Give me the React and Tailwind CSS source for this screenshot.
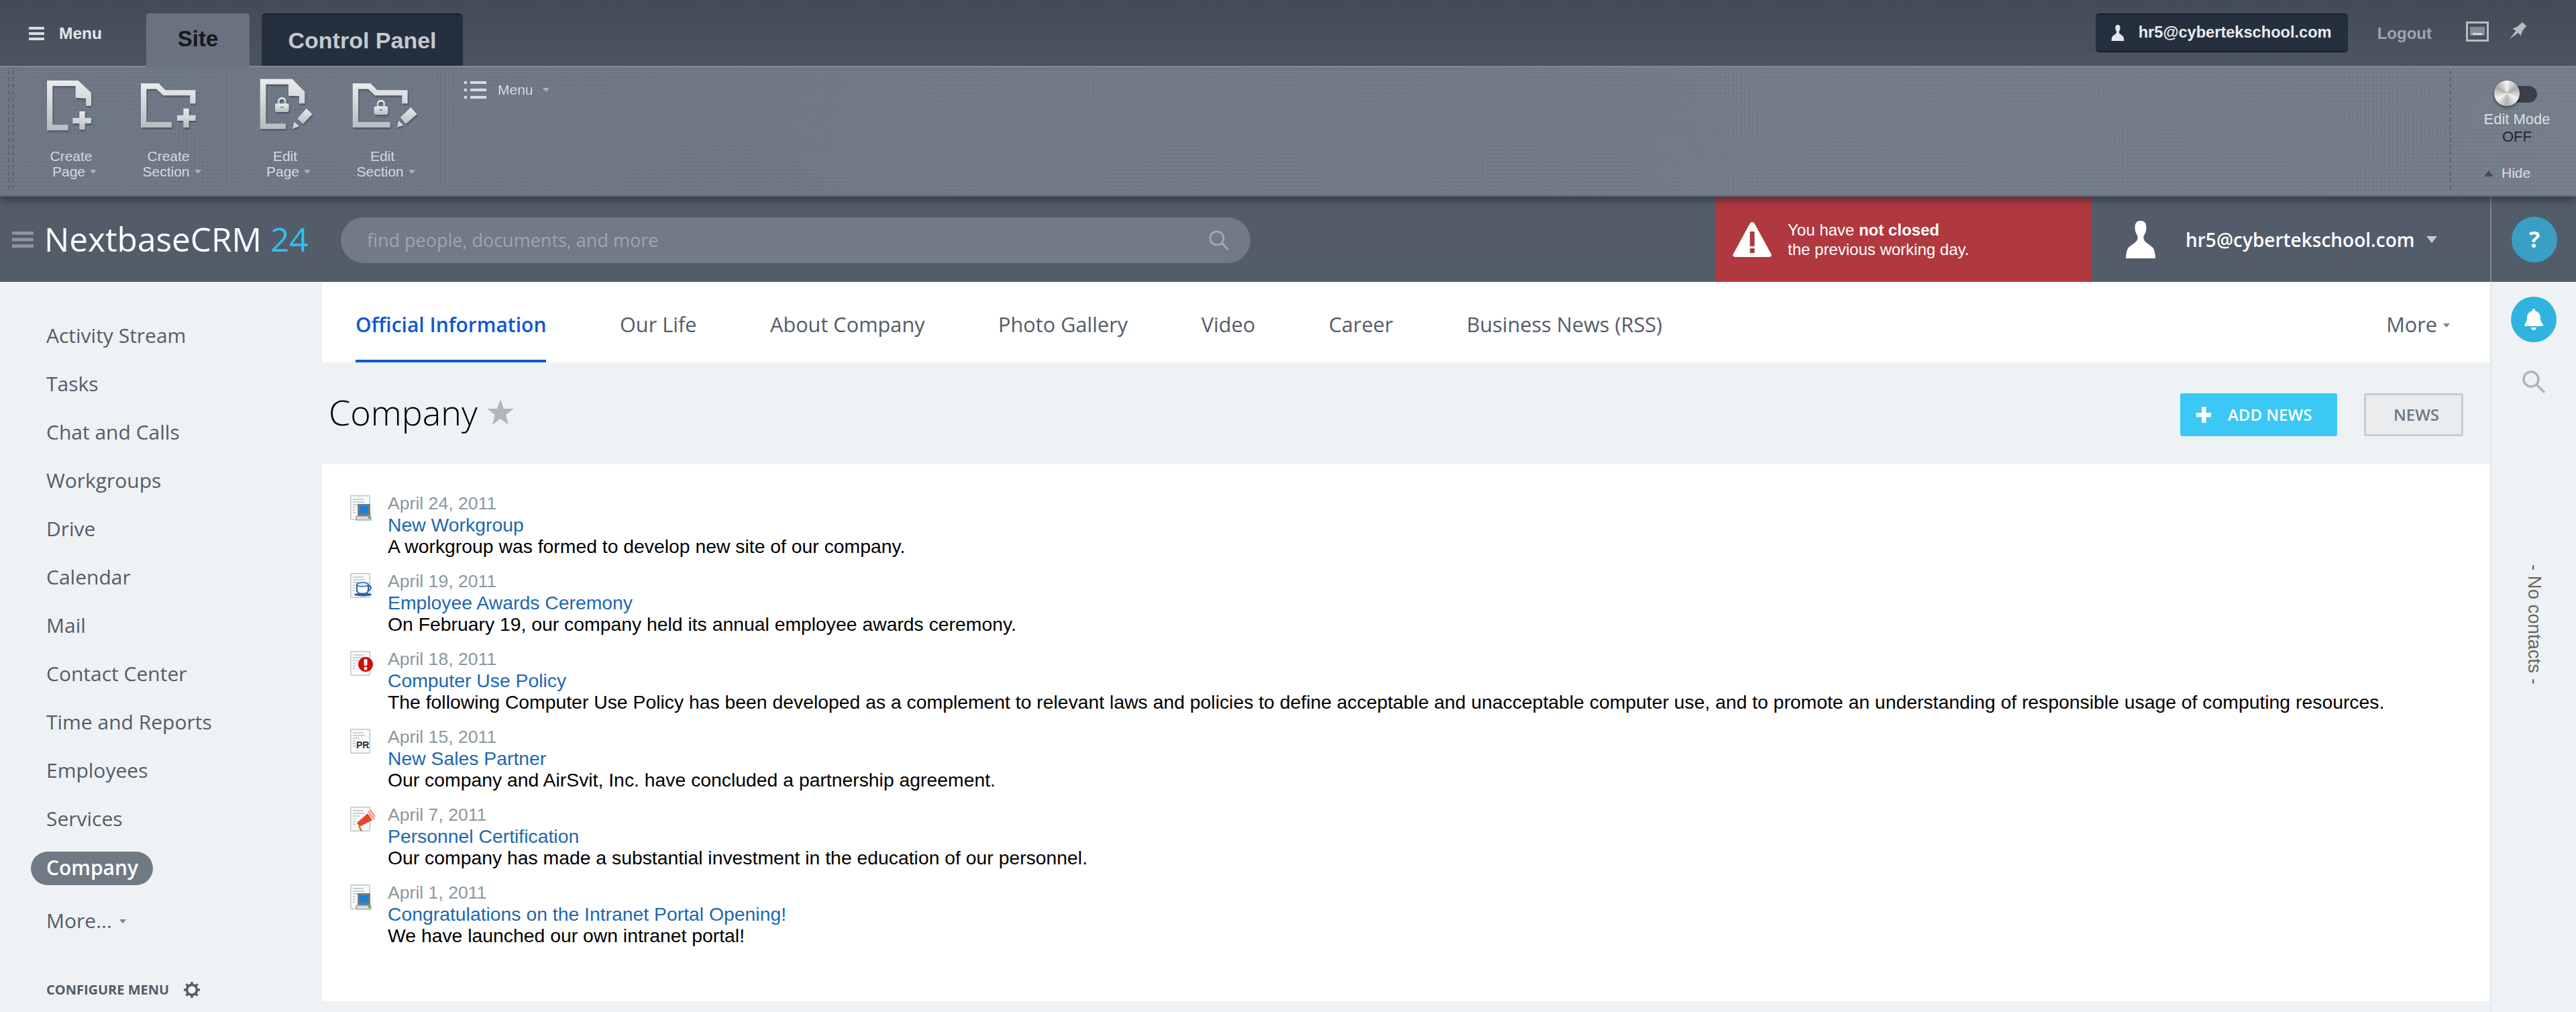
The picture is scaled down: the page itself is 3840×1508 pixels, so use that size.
import { FaBell } from 'react-icons/fa';

const Caret = ({ className = 'border-t-[#a9b0b8]' }) => (
    <span className={`inline-block w-0 h-0 border-x-[5px] border-t-[6px] border-x-transparent ${className}`} />
);

const Hamburger = ({ className }) => (
    <svg viewBox="0 0 24 20" preserveAspectRatio="none" className={className} fill="currentColor">
        <rect x="0" y="0" width="24" height="4" />
        <rect x="0" y="8" width="24" height="4" />
        <rect x="0" y="16" width="24" height="4" />
    </svg>
);

const Person = ({ className }) => (
    <svg viewBox="0 0 46 56" className={className} fill="currentColor">
        <path d="M23 0c-5 0-7.500 4-7.500 10 0 5 1.500 9 3.500 12 1 2 1 5-1 8-3 4-10 7-13 11-2 4-3 10-3 15h44c0-5-1-11-3-15-3-4-10-7-13-11-2-3-2-6-1-8 2-3 3.500-7 3.500-12 0-6-2.500-10-8.500-10z" />
    </svg>
);

const ToolIcon = ({ id, children }) => (
    <svg viewBox="0 0 300 252" className="w-[100px] h-[84px] overflow-visible drop-shadow-[1px_2px_1px_rgba(40,48,58,0.55)]">
        <defs>
            <linearGradient id={id} x1="0" y1="0" x2="0" y2="1">
                <stop offset="0" stopColor="#e9eced" />
                <stop offset="1" stopColor="#b7bdc0" />
            </linearGradient>
        </defs>
        <g fill={`url(#${id})`}>{children}</g>
    </svg>
);

const Lock = ({ x, y }) => (
    <g transform={`translate(${x} ${y})`}>
        <path d="M12 32v-12a19 19 0 0 1 38 0v12h-9v-12a10 10 0 0 0-20 0v12z" />
        <rect x="0" y="30" width="62" height="38" rx="9" />
        <rect x="24" y="44" width="14" height="6" fill="#7c8590" />
    </g>
);

const toolButtons = [
    {
        a: 'Create', b: 'Page', icon: (
            <ToolIcon id="tool1">
                <path d="M42 15H182L240 70V128H217V95L170 92V40H67V213H137V238H42Z" />
                <path d="M187 153H212V182H240V207H212V235H187V207H157V182H187Z" />
            </ToolIcon>
        ),
    },
    {
        a: 'Create', b: 'Section', icon: (
            <ToolIcon id="tool2">
                <path d="M27 28H107L137 58H272V118H247V82H127L97 53H52V200H165V225H27Z" />
                <path d="M217 140H242V170H272V195H242V225H217V195H189V170H217Z" />
            </ToolIcon>
        ),
    },
    null,
    {
        a: 'Edit', b: 'Page', icon: (
            <ToolIcon id="tool3">
                <path d="M38 8H182L238 65V118H213V85L165 83V32H64V208H153V232H38Z" />
                <Lock x={105} y={88} />
                <path d="M205 185L245 140L272 165L230 210Z" />
                <path d="M182 232L192 200L213 220Z" />
            </ToolIcon>
        ),
    },
    {
        a: 'Edit', b: 'Section', icon: (
            <ToolIcon id="tool4">
                <path d="M17 28H97L127 58H263V118H238V82H117L87 53H42V200H185V225H17Z" />
                <Lock x={113} y={100} />
                <path d="M230 180L277 135L305 165L255 210Z" />
                <path d="M215 225L223 195L245 215Z" />
            </ToolIcon>
        ),
    },
    null,
];

const TopBar = () => (
    <div className="h-[98px] flex shrink-0 bg-[repeating-linear-gradient(0deg,rgba(255,255,255,0.025)_0_1px,transparent_1px_3px),repeating-linear-gradient(90deg,rgba(0,0,0,0.06)_0_1px,transparent_1px_3px),linear-gradient(#434b56,#4c5561)]">
        <div className="w-[218px] pl-[43px] pt-[39px] flex items-start">
            <Hamburger className="w-[23px] h-[20px] mt-[1px] text-[#d9dcde]" />
            <span className="ml-[22px] text-[24.500px] leading-[22px] font-bold text-[#e4e6e8]">Menu</span>
        </div>
        <div className="mt-[20px] w-[154px] h-[80px] rounded-t-[4px] bg-[#69727f] z-20 flex items-center justify-center text-[33px] font-bold text-[#16181b] pb-[4px]">Site</div>
        <div className="mt-[20px] ml-[18px] w-[300px] h-[78px] rounded-t-[6px] bg-[#25303f] border-t-2 border-[#161d27] flex items-center justify-center text-[34px] font-bold text-[#c5c9ce]">Control Panel</div>
        <div className="ml-auto flex items-start">
            <div className="mt-[20px] w-[376px] h-[58px] rounded-[5px] bg-[#25303f] border-t-2 border-b-2 border-[#161d27] flex items-center pl-[21px] text-[#e9ebed]">
                <Person className="w-[23px] h-[24px] text-[#e4e7e9]" />
                <span className="ml-[20px] text-[23.600px] font-bold whitespace-nowrap">hr5@cybertekschool.com</span>
            </div>
            <span className="ml-[44px] mt-[35px] text-[24px] leading-[30px] font-bold text-[#9ea6af]">Logout</span>
            <svg viewBox="0 0 34 30" className="ml-[51px] mt-[32px] w-[34px] h-[30px]">
                <rect x="1.500" y="1.500" width="31" height="27" fill="none" stroke="#b7bdc2" strokeWidth="3" />
                <rect x="6" y="8" width="22" height="13" fill="#a1a8ae" opacity="0.7" />
                <rect x="10" y="17" width="14" height="3" fill="#d3d6d8" />
            </svg>
            <svg viewBox="0 0 30 30" className="ml-[30px] mt-[32px] w-[30px] h-[28px]">
                <path d="M0 28L10 15L5 11L11 9L20 2L19 0L28 8L26 7.500L20 16L18 23L14 18Z" fill="#b8bdc2" />
            </svg>
            <div className="w-[70px]" />
        </div>
    </div>
);

const ToolPanel = () => (
    <div className="relative z-10 h-[195px] shrink-0 flex border-t-2 border-b-2 border-t-[#7f8893] border-b-[#5e6772] shadow-[0_6px_10px_rgba(35,40,48,0.55)] bg-[#737c89] bg-[radial-gradient(rgba(0,0,0,0.09)_1px,transparent_1.500px),linear-gradient(90deg,#6f7885,#75808b)] bg-[length:6px_6px,100%_100%]">
        <div className="ml-[12px] mt-[5px] w-[8px] h-[177px] border-x-2 border-dashed border-[#5a636f]" />
        <div className="flex ml-[21px] gap-[15px]">
            {toolButtons.map((tool, i) => tool ? (
                <div key={tool.a + tool.b} className="w-[130px] flex flex-col items-center pt-[15px]">
                    {tool.icon}
                    <div className="mt-[22px] text-center text-[21px] leading-[23px] text-[#d5d9dd]">
                        <div>{tool.a}</div>
                        <div className="flex items-center justify-center gap-[7px] ml-[10px]">{tool.b}<Caret className="border-t-[#aab1b8]" /></div>
                    </div>
                </div>
            ) : (
                <div key={i} className="w-[2px] h-[155px] mt-[15px] mx-[6px] bg-[#69727e]" />
            ))}
        </div>
        <div className="ml-[28px] mt-[21px] flex items-start">
            <svg viewBox="0 0 33 26" className="w-[33px] h-[26px] text-[#d6dadd]" fill="currentColor">
                <rect x="0" y="0" width="4" height="4" />
                <rect x="9" y="0" width="24" height="4" />
                <rect x="0" y="11" width="4" height="4" />
                <rect x="9" y="11" width="24" height="4" />
                <rect x="0" y="22" width="4" height="4" />
                <rect x="9" y="22" width="24" height="4" />
            </svg>
            <span className="ml-[17px] text-[21px] leading-[26px] text-[#d5d9dd]">Menu</span>
            <Caret className="ml-[14px] mt-[10px] border-t-[#aab1b8]" />
        </div>
        <div className="ml-auto mt-[5px] w-[2px] h-[177px] border-l-2 border-dashed border-[#5a636f]" />
        <div className="w-[186px] pl-[64px] flex flex-col text-[22px] leading-[26px]">
            <div className="relative mt-[20px] w-[65px] h-[38px]">
                <div className="absolute left-[32px] top-[7px] w-[33px] h-[27px] rounded-r-full bg-[#3a3f47] border border-[#7d8690]" />
                <div className="absolute left-0 top-0 w-[38px] h-[38px] rounded-full bg-[conic-gradient(#f4f4f4,#aaa,#f2f2f2,#b0b0b0,#f4f4f4,#aaa,#f4f4f4)] shadow-[0_2px_4px_rgba(30,35,42,0.7)]" />
            </div>
            <div className="-ml-[16px] mt-[7px] w-[100px] text-center whitespace-nowrap text-[#dcdfe2]">Edit Mode</div>
            <div className="-ml-[16px] w-[100px] text-center text-[#1c2530]">OFF</div>
            <div className="-ml-[15px] mt-[28px] flex items-center gap-[12px] text-[#dcdfe2] text-[21px]">
                <span className="inline-block w-0 h-0 border-x-[7px] border-b-[9px] border-x-transparent border-b-[#454d58]" />Hide
            </div>
        </div>
    </div>
);

const Header = () => (
    <div className="h-[127px] shrink-0 flex bg-[#535c69] font-['Open_Sans',sans-serif]">
        <div className="w-[508px] flex items-center pl-[18px]">
            <Hamburger className="w-[32px] h-[24px] text-[#8c949e]" />
            <span className="ml-[16px] text-[49.500px] leading-none text-white whitespace-nowrap">NextbaseCRM <span className="text-[#2fc0f0]">24</span></span>
        </div>
        <div className="mt-[31px] w-[1356px] h-[68px] rounded-full bg-[#717a85] flex items-center pl-[39px] pr-[32px] text-[27px] text-[#9ea6af]">
            <span>find people, documents, and more</span>
            <svg viewBox="0 0 30 30" className="ml-auto w-[30px] h-[30px]" fill="none" stroke="#a6adb5" strokeWidth="2.500">
                <circle cx="12" cy="12" r="10" />
                <path d="M19 19L29 29" />
            </svg>
        </div>
        <div className="ml-[694px] w-[560px] bg-[#b0383f] flex items-center pl-[25px] font-['Liberation_Sans',sans-serif] text-white">
            <svg viewBox="0 0 58 52" className="w-[58px] h-[52px]">
                <path d="M29 0C31 0 32 1 33 3L57 47C59 50 57 52 54 52H4C1 52 -1 50 1 47L25 3C26 1 27 0 29 0Z" fill="#fff" />
                <rect x="25.500" y="14" width="7" height="22" fill="#b0383f" />
                <rect x="25.500" y="39" width="7" height="7" fill="#b0383f" />
            </svg>
            <div className="ml-[24px] text-[24px] leading-[29px]">
                <div>You have <b>not closed</b></div>
                <div>the previous working day.</div>
            </div>
        </div>
        <div className="w-[594px] flex items-center pl-[49px] text-white">
            <Person className="w-[46px] h-[56px]" />
            <span className="ml-[45px] text-[28px] font-semibold whitespace-nowrap">hr5@cybertekschool.com</span>
            <span className="ml-[18px] w-0 h-0 border-x-[8px] border-t-[10px] border-x-transparent border-t-[#c5cad0]" />
        </div>
        <div className="w-[2px] bg-[#7e8691]" />
        <div className="flex-1 flex items-center pl-[30px]">
            <div className="w-[68px] h-[68px] rounded-full bg-[#3b9fc5] flex items-center justify-center text-[34px] font-bold text-white">?</div>
        </div>
    </div>
);

const sideItems = ['Activity Stream', 'Tasks', 'Chat and Calls', 'Workgroups', 'Drive', 'Calendar', 'Mail', 'Contact Center', 'Time and Reports', 'Employees', 'Services'];

const Sidebar = () => (
    <div className="w-[480px] shrink-0 pt-[44px] pl-[69px] text-[30px] leading-[72px] text-[#535c69] font-['Open_Sans',sans-serif]">
        {sideItems.map(item => <div key={item} className="h-[72px]">{item}</div>)}
        <div className="-ml-[23px] mt-[13px] w-[182px] h-[50px] rounded-full bg-[#707a85] pl-[23px] leading-[48px] font-semibold text-white">Company</div>
        <div className="mt-[28px] flex items-center h-[50px]">
            More...<Caret className="ml-[11px] mt-[2px] border-t-[#7c8590]" />
        </div>
        <div className="mt-[66px] flex items-center text-[20px] leading-[24px] font-bold">
            CONFIGURE MENU
            <svg viewBox="0 0 24 24" className="ml-[22px] w-[24px] h-[24px]" fill="none" stroke="#535c69">
                <circle cx="12" cy="12" r="7.500" strokeWidth="3.500" />
                <path d="M12 0V5M12 19V24M0 12H5M19 12H24M3.500 3.500L7 7M17 17L20.500 20.500M3.500 20.500L7 17M17 7L20.500 3.500" strokeWidth="3.500" />
            </svg>
        </div>
    </div>
);

const navItems = ['Our Life', 'About Company', 'Photo Gallery', 'Video', 'Career', 'Business News (RSS)'];

const DocIcon = ({ children }) => (
    <svg viewBox="0 0 40 40" className="w-[40px] h-[40px] mt-[4px] overflow-visible">
        <rect x="0.750" y="0.750" width="28.500" height="35.500" rx="1.500" fill="#fafbfb" stroke="#b9c6c8" strokeWidth="1.500" />
        <g stroke="#bcc5c8" strokeWidth="1.300">
            <path d="M4 6H20M4 10H22M4 14H14M4 18H8M4 22H8M4 26H8" />
        </g>
        {children}
    </svg>
);

const Computer = () => (
    <g>
        <rect x="11" y="13" width="19" height="18" rx="1" fill="#737b7f" />
        <rect x="14" y="16" width="13" height="11" fill="#1a80d8" />
        <rect x="9" y="31" width="22" height="6" fill="#d6dbdb" stroke="#868e90" strokeWidth="1" />
        <rect x="27" y="32" width="3" height="3" fill="#4fb04f" />
    </g>
);

const news = [
    {
        date: 'April 24, 2011', title: 'New Workgroup', text: 'A workgroup was formed to develop new site of our company.',
        icon: <Computer />,
    },
    {
        date: 'April 19, 2011', title: 'Employee Awards Ceremony', text: 'On February 19, our company held its annual employee awards ceremony.',
        icon: (
            <g>
                <path d="M10 17H27V25C27 29 24 31 19 31C14 31 10 29 10 25Z" fill="#fff" stroke="#2b5fae" strokeWidth="2" />
                <ellipse cx="18.500" cy="17" rx="8.500" ry="3" fill="#dfe8f4" stroke="#2b5fae" strokeWidth="1.500" />
                <path d="M27 19C32 18 33 24 26 26" fill="none" stroke="#2b5fae" strokeWidth="2" />
                <ellipse cx="19" cy="32" rx="13" ry="2.500" fill="#2b5fae" />
            </g>
        ),
    },
    {
        date: 'April 18, 2011', title: 'Computer Use Policy', text: 'The following Computer Use Policy has been developed as a complement to relevant laws and policies to define acceptable and unacceptable computer use, and to promote an understanding of responsible usage of computing resources.',
        icon: (
            <g>
                <circle cx="23" cy="20" r="11" fill="#c90f0f" />
                <rect x="20.500" y="12" width="5" height="10" rx="2" fill="#fff" />
                <circle cx="23" cy="26" r="2.500" fill="#fff" />
            </g>
        ),
    },
    {
        date: 'April 15, 2011', title: 'New Sales Partner', text: 'Our company and AirSvit, Inc. have concluded a partnership agreement.',
        icon: <text x="9" y="29" fontFamily="Liberation Sans" fontWeight="700" fontSize="14" fill="#2c2c2c">PR</text>,
    },
    {
        date: 'April 7, 2011', title: 'Personnel Certification', text: 'Our company has made a substantial investment in the education of our personnel.',
        icon: (
            <g>
                <path d="M10 24L26 10L33 20L14 30Z" fill="#e8452c" />
                <path d="M27 7L36 19M30 5L37 15" stroke="#ef9a8a" strokeWidth="2.500" />
                <path d="M13 29L17 36" stroke="#c9902e" strokeWidth="3" />
            </g>
        ),
    },
    {
        date: 'April 1, 2011', title: 'Congratulations on the Intranet Portal Opening!', text: 'We have launched our own intranet portal!',
        icon: <Computer />,
    },
];

const Main = () => (
    <div className="w-[3232px] shrink-0 flex flex-col">
        <div className="h-[120px] bg-white flex items-stretch pl-[50px] text-[30.700px] text-[#535c69] font-medium font-['Open_Sans',sans-serif]">
            <div className="h-full flex items-center border-b-4 border-[#1058d0] text-[#1058d0] text-[30px] font-semibold pt-[11px]">Official Information</div>
            {navItems.map(item => <div key={item} className="ml-[109.500px] flex items-center pt-[7px]">{item}</div>)}
            <div className="ml-auto pr-[60px] flex items-center pt-[7px]">
                More<Caret className="ml-[9px] mt-[3px] border-t-[#7c8590]" />
            </div>
        </div>
        <div className="h-[152px] flex items-center pl-[10px] pr-[40px] font-['Open_Sans',sans-serif]">
            <span className="text-[52px] -mt-[4px] font-light text-black">Company</span>
            <svg viewBox="0 0 40 38" className="ml-[14px] -mt-[4px] w-[40px] h-[38px]">
                <path d="M20 0L25 14H40L28 23L32 38L20 29L8 38L12 23L0 14H15Z" fill="#b1b6bd" />
            </svg>
            <div className="ml-auto mt-[4px] w-[234px] h-[64px] rounded-[3px] bg-[#3bc8f5] flex items-center pl-[24px] text-white text-[24px] font-semibold">
                <svg viewBox="0 0 22 24" className="w-[22px] h-[24px]" fill="#fff">
                    <rect x="8" y="0" width="6.500" height="24" />
                    <rect x="0" y="9" width="22" height="6.500" />
                </svg>
                <span className="ml-[25px]">ADD NEWS</span>
            </div>
            <div className="ml-[40px] mt-[4px] w-[148px] h-[64px] rounded-[3px] border-[3px] border-[#c6cdd3] bg-[#eaecee] flex items-center justify-center text-[24px] font-semibold text-[#6f7781] pl-[8px]">NEWS</div>
        </div>
        <div className="h-[800px] bg-white pl-[42px] pt-[42px] text-[28.350px] leading-[32px] font-['Liberation_Sans',sans-serif]">
            {news.map(row => (
                <div key={row.title} className="h-[116px] flex">
                    <div className="w-[56px] shrink-0"><DocIcon>{row.icon}</DocIcon></div>
                    <div>
                        <div className="text-[#8a979e] text-[26.600px]">{row.date}</div>
                        <div className="text-[#2067b0]">{row.title}</div>
                        <div className="text-black whitespace-nowrap">{row.text}</div>
                    </div>
                </div>
            ))}
        </div>
    </div>
);

const RightBar = () => (
    <div className="flex-1 border-l-2 border-[#dfe5e8] flex flex-col items-center">
        <div className="mt-[22px] w-[68px] h-[68px] rounded-full bg-[#2fb4df] flex items-center justify-center">
            <FaBell className="w-[30px] h-[32px] text-white" />
        </div>
        <svg viewBox="0 0 34 34" className="mt-[42px] w-[34px] h-[34px]" fill="none" stroke="#adb5ba" strokeWidth="3.500">
            <circle cx="13" cy="13" r="11" />
            <path d="M21 21L33 33" />
        </svg>
        <div className="mt-[255px] ml-[2px] [writing-mode:vertical-rl] text-[27.500px] leading-[32px] text-[#666] font-['Liberation_Sans',sans-serif] whitespace-nowrap">- No contacts -</div>
    </div>
);

export default function App() {
    return (
        <div className="w-[3840px] h-[1508px] overflow-hidden flex flex-col bg-[#eef2f4] font-['Liberation_Sans',sans-serif]">
            <TopBar />
            <ToolPanel />
            <Header />
            <div className="flex-1 flex min-h-0">
                <Sidebar />
                <Main />
                <RightBar />
            </div>
        </div>
    );
}
